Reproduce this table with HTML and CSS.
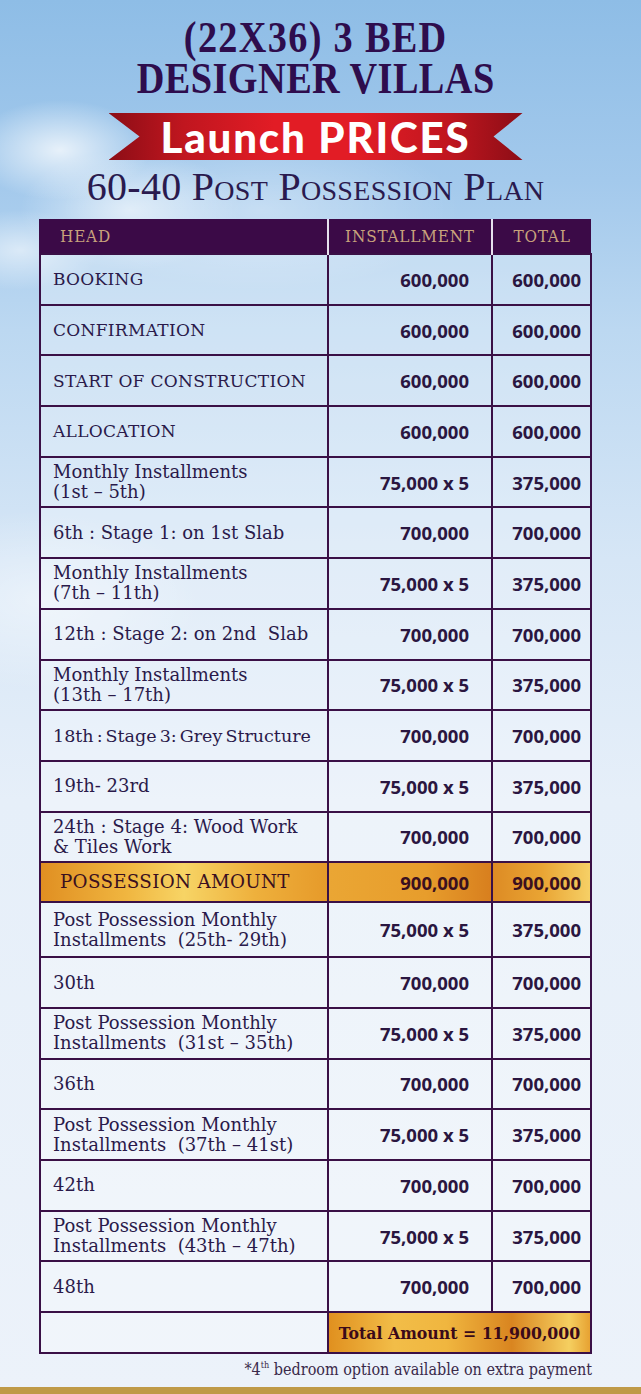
FILE: index.html
```html
<!DOCTYPE html>
<html>
<head>
<meta charset="utf-8">
<link rel="stylesheet" href="styles.css">
</head>
<body>
<div class="page">
  <h1 class="title"><span class="title-1">(22X36) 3 BED</span><span>DESIGNER VILLAS</span></h1>
  <div class="ribbon"><span>Launch PRICES</span></div>
  <h2 class="subtitle">60-40 Post Possession Plan</h2>
  <table class="plan">
    <colgroup><col class="w-head"><col class="w-inst"><col class="w-total"></colgroup>
    <thead>
      <tr><th class="c-head">HEAD</th><th class="c-inst">INSTALLMENT</th><th class="c-total">TOTAL</th></tr>
    </thead>
    <tbody>
      <tr><td class="lbl caps">BOOKING</td><td class="num">600,000</td><td class="num">600,000</td></tr>
      <tr><td class="lbl caps">CONFIRMATION</td><td class="num">600,000</td><td class="num">600,000</td></tr>
      <tr><td class="lbl caps">START OF CONSTRUCTION</td><td class="num">600,000</td><td class="num">600,000</td></tr>
      <tr><td class="lbl caps">ALLOCATION</td><td class="num">600,000</td><td class="num">600,000</td></tr>
      <tr><td class="lbl">Monthly Installments<br>(1st – 5th)</td><td class="num">75,000 x 5</td><td class="num">375,000</td></tr>
      <tr><td class="lbl">6th : Stage 1: on 1st Slab</td><td class="num">700,000</td><td class="num">700,000</td></tr>
      <tr><td class="lbl">Monthly Installments<br>(7th – 11th)</td><td class="num">75,000 x 5</td><td class="num">375,000</td></tr>
      <tr><td class="lbl">12th : Stage 2: on 2nd&nbsp; Slab</td><td class="num">700,000</td><td class="num">700,000</td></tr>
      <tr><td class="lbl">Monthly Installments<br>(13th – 17th)</td><td class="num">75,000 x 5</td><td class="num">375,000</td></tr>
      <tr><td class="lbl tight">18th : Stage 3: Grey Structure</td><td class="num">700,000</td><td class="num">700,000</td></tr>
      <tr><td class="lbl">19th- 23rd</td><td class="num">75,000 x 5</td><td class="num">375,000</td></tr>
      <tr><td class="lbl">24th : Stage 4: Wood Work<br>&amp; Tiles Work</td><td class="num">700,000</td><td class="num">700,000</td></tr>
      <tr class="gold-row"><td class="lbl caps gold-a">POSSESSION AMOUNT</td><td class="num gold-b">900,000</td><td class="num gold-c">900,000</td></tr>
      <tr class="tall"><td class="lbl">Post Possession Monthly<br>Installments&nbsp; (25th- 29th)</td><td class="num">75,000 x 5</td><td class="num">375,000</td></tr>
      <tr><td class="lbl">30th</td><td class="num">700,000</td><td class="num">700,000</td></tr>
      <tr><td class="lbl">Post Possession Monthly<br>Installments&nbsp; (31st – 35th)</td><td class="num">75,000 x 5</td><td class="num">375,000</td></tr>
      <tr><td class="lbl">36th</td><td class="num">700,000</td><td class="num">700,000</td></tr>
      <tr><td class="lbl">Post Possession Monthly<br>Installments&nbsp; (37th – 41st)</td><td class="num">75,000 x 5</td><td class="num">375,000</td></tr>
      <tr><td class="lbl">42th</td><td class="num">700,000</td><td class="num">700,000</td></tr>
      <tr><td class="lbl">Post Possession Monthly<br>Installments&nbsp; (43th – 47th)</td><td class="num">75,000 x 5</td><td class="num">375,000</td></tr>
      <tr><td class="lbl">48th</td><td class="num">700,000</td><td class="num">700,000</td></tr>
      <tr class="total-row"><td class="lbl"></td><td class="total-cell" colspan="2">Total Amount = 11,900,000</td></tr>
    </tbody>
  </table>
  <p class="note">*4<sup>th</sup> bedroom option available on extra payment</p>
  <div class="gold-bar"></div>
</div>
</body>
</html>
```

FILE: styles.css
```css
html, body {
  margin: 0;
  padding: 0;
}

body {
  width: 641px;
  height: 1394px;
  overflow: hidden;
}

.page {
  position: relative;
  box-sizing: border-box;
  width: 641px;
  height: 1394px;
  padding-right: 10px;
  display: flex;
  flex-direction: column;
  align-items: center;
  background:
    radial-gradient(ellipse 90px 50px at 60px 150px, rgba(255,255,255,0.75), rgba(255,255,255,0) 100%),
    radial-gradient(ellipse 110px 60px at 130px 210px, rgba(255,255,255,0.6), rgba(255,255,255,0) 100%),
    radial-gradient(ellipse 80px 40px at 20px 250px, rgba(255,255,255,0.55), rgba(255,255,255,0) 100%),
    radial-gradient(ellipse 200px 80px at 260px 210px, rgba(255,255,255,0.35), rgba(255,255,255,0) 100%),
    radial-gradient(ellipse 160px 90px at 40px 600px, rgba(255,255,255,0.45), rgba(255,255,255,0) 100%),
    linear-gradient(to bottom, #8ebde6 0px, #a3c9ec 180px, #bcd8f1 330px, #d6e6f6 560px, #e6eff9 800px, #ecf2fa 1394px);
  font-family: "DejaVu Serif", serif;
  color: #2b1a4b;
}

.title {
  margin: 17px 0 0 0;
  display: flex;
  flex-direction: column;
  align-items: center;
  font-family: "Liberation Serif", serif;
  font-weight: 700;
  font-size: 44px;
  line-height: 41px;
  letter-spacing: 0.5px;
  color: #2e0d4d;
  transform: scaleX(0.87);
}

.title-1 {
  letter-spacing: 1.5px;
}

.ribbon {
  margin-top: 14px;
  width: 414px;
  height: 47px;
  display: flex;
  align-items: center;
  justify-content: center;
  background: linear-gradient(to right, #8c0d16 0%, #c0161f 18%, #e21c25 40%, #e21c25 60%, #c0161f 82%, #8c0d16 100%);
  clip-path: polygon(0 0, 100% 0, 93% 50%, 100% 100%, 0 100%, 7.5% 50%);
}

.ribbon span {
  font-family: "Lato", sans-serif;
  font-weight: 900;
  font-size: 42px;
  color: #ffffff;
  letter-spacing: 1.8px;
  line-height: 1;
  margin-top: 1px;
}

.subtitle {
  margin: 6px 0 0 0;
  font-family: "Liberation Serif", serif;
  font-weight: 400;
  font-variant: small-caps;
  font-size: 40px;
  line-height: 42px;
  letter-spacing: 0.3px;
  color: #2a1a4e;
}

.plan {
  margin-top: 11px;
  width: 551px;
  border-collapse: collapse;
  table-layout: fixed;
}

.w-head { width: 288px; }
.w-inst { width: 164px; }
.w-total { width: 99px; }

.plan th {
  height: 34px;
  padding: 0;
  background: #3b0a47;
  color: #c8a27c;
  font-family: "DejaVu Serif", serif;
  font-stretch: condensed;
  font-weight: 400;
  font-size: 17px;
  letter-spacing: 0.8px;
  border-left: 2px solid #e6e0ee;
}

.plan th:first-child {
  border-left: 2px solid #3b0a47;
}

.c-head {
  text-align: left;
  padding-left: 19px !important;
}

.c-inst,
.c-total {
  text-align: center;
}

.plan td {
  height: 48.7px;
  border: 2px solid #3a1046;
  background: rgba(255, 255, 255, 0.28);
  padding: 0;
  vertical-align: middle;
}

.plan tr.tall td {
  height: 53px;
}

.lbl {
  padding-left: 12px !important;
  font-family: "DejaVu Serif", serif;
  font-size: 18px;
  line-height: 20px;
  color: #2a1a4a;
  white-space: nowrap;
}

.lbl.tight {
  font-size: 17.5px;
  word-spacing: -2.5px;
}

.lbl.caps {
  font-size: 17px;
  letter-spacing: 0.3px;
}

.num {
  text-align: right;
  font-family: "Open Sans", sans-serif;
  font-weight: 700;
  font-size: 18.5px;
  color: #2a1640;
}

.plan td.num:nth-child(2) {
  padding-right: 22px;
}

.plan td.num:nth-child(3) {
  padding-right: 9px;
}

.plan tr.gold-row td {
  height: 38px;
}

.gold-a {
  background: linear-gradient(to right, #e08f22 0%, #f0b640 30%, #f7d465 50%, #eeb03c 75%, #e69a2a 100%) !important;
  color: #3a1020 !important;
  padding-left: 19px !important;
  font-size: 18.3px !important;
}

.gold-b {
  background: linear-gradient(to right, #eaa634 0%, #e79d2c 60%, #d87f1e 100%) !important;
}

.gold-c {
  background: linear-gradient(to right, #dd8b24 0%, #e9a433 50%, #f6d066 100%) !important;
}

.plan tr.gold-row td.num {
  color: #3a1020;
}

.plan tr.total-row td {
  height: 39px;
}

.total-cell {
  background: linear-gradient(to right, #e0901f 0%, #f2bd48 25%, #f0b63f 45%, #d98520 70%, #f5cf60 92%, #e7a232 100%) !important;
  font-family: "DejaVu Serif", serif;
  font-stretch: condensed;
  font-weight: 700;
  font-size: 17.5px;
  color: #3a0a1a;
  text-align: center;
}

.note {
  align-self: flex-end;
  margin: 7px 39px 0 0;
  font-family: "DejaVu Serif", serif;
  font-stretch: condensed;
  font-size: 16px;
  line-height: 18px;
  color: #3a2a4a;
}

.note sup {
  font-size: 9px;
  vertical-align: 7px;
  line-height: 0;
}

.gold-bar {
  position: absolute;
  left: 0;
  right: 0;
  bottom: 0;
  height: 7px;
  background: #bf9a48;
}
```
